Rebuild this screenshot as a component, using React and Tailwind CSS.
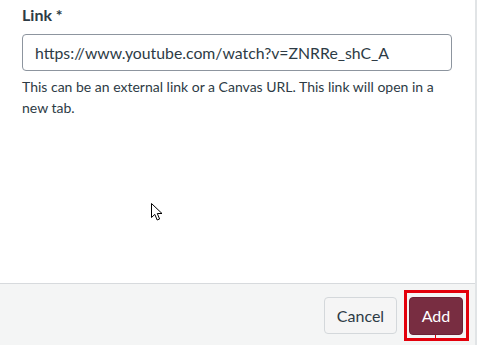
import React from "react";

function Pointer() {
  return (
    <svg
      className="pointer-events-none absolute left-[150px] top-[202px]"
      width="14"
      height="20"
      viewBox="0 0 14 20"
    >
      <path
        d="M1.5 1.5 L1.5 15.5 L4.8 12.4 L7.2 18 L9.6 17 L7.3 11.5 L12 11.5 Z"
        fill="#fff"
        stroke="#000"
        strokeWidth="1"
        strokeLinejoin="miter"
      />
    </svg>
  );
}

export default function App() {
  return (
    <div
      className="relative flex h-[345px] w-[477px] flex-col border-r-2 border-[#e1e4e6] bg-white text-[#2d3b45]"
      style={{ fontFamily: "Lato, 'Noto Sans', sans-serif" }}
    >
      <div className="flex-1 px-[22px] pt-[3px]">
        <label className="block text-[16px] font-bold leading-[24px]">Link *</label>
        <div className="mt-[7px] flex h-[37px] w-[430px] items-center rounded-[4px] border border-[#8d959f] px-[12px] text-[15.8px]">
          https://www.youtube.com/watch?v=ZNRRe_shC_A
        </div>
        <p className="mt-[5px] text-[14px] leading-[21px]">
          This can be an external link or a Canvas URL. This link will open in a new tab.
        </p>
      </div>

      <div className="flex h-[62px] items-start justify-end gap-[12px] border-t border-[#d7dadd] bg-[#f4f5f5] pr-[12px] pt-[13px]">
        <button className="h-[37px] w-[73px] rounded-[4px] border border-[#d4d8db] bg-[#f5f5f5] text-[16px] text-[#2d3b45]">
          Cancel
        </button>
        <div className="relative">
          <button className="h-[38px] w-[54px] rounded-[4px] border border-[#6a2236] bg-[#782d41] text-[16px] text-white">
            Add
          </button>
          <span className="pointer-events-none absolute left-[-5px] top-[-7px] h-[51px] w-[65px] border-[3px] border-[#e3000b]" />
          <span className="absolute left-[26px] top-[38px] h-[3px] w-px bg-[#e3000b]" />
        </div>
      </div>

      <Pointer />
    </div>
  );
}
